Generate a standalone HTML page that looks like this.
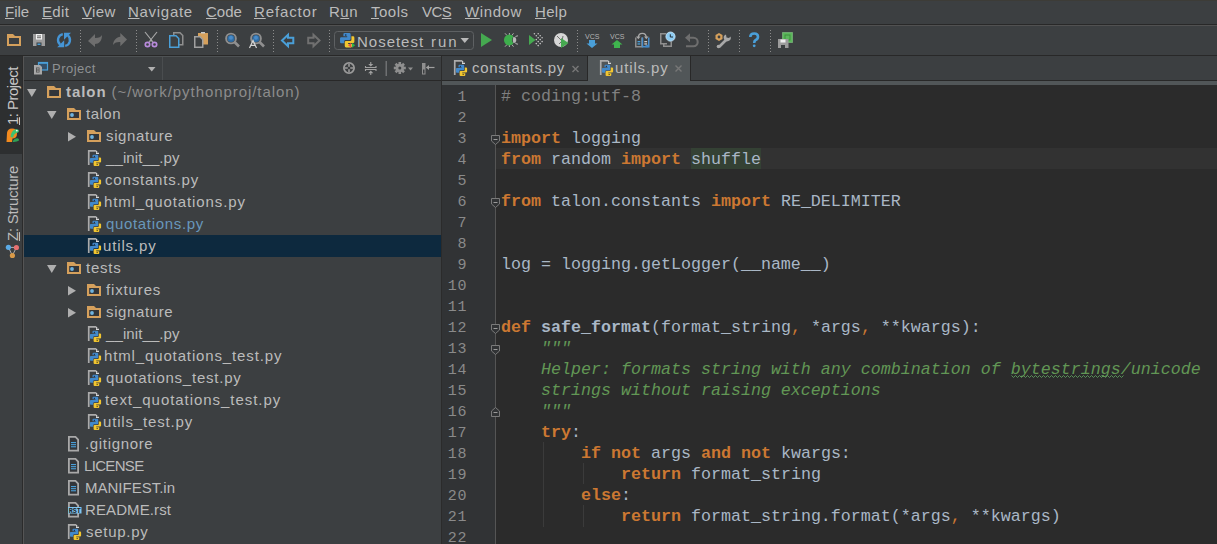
<!DOCTYPE html><html><head><meta charset="utf-8"><style>
html,body{margin:0;padding:0;}
body{width:1217px;height:544px;overflow:hidden;position:relative;background:#3C3F41;font-family:'Liberation Sans', sans-serif;}
.r{position:absolute;}
.t{position:absolute;white-space:pre;line-height:0;height:0;}
svg{position:absolute;overflow:visible;}
u{text-decoration:underline;text-underline-offset:1px;text-decoration-thickness:1px;}
.rot u{text-underline-offset:1px;}
.k{color:#CC7832;font-weight:bold;}
.c{color:#808080;}
.d{color:#629755;font-style:italic;}
.fn{font-weight:bold;}
.o{color:#CC7832;}
</style></head><body>
<div class="t" style="left:5px;top:12px;font-family:'Liberation Sans', sans-serif;font-size:15px;color:#BBBBBB;font-weight:normal;letter-spacing:0.000px;"><u>F</u>ile</div>
<div class="t" style="left:42px;top:12px;font-family:'Liberation Sans', sans-serif;font-size:15px;color:#BBBBBB;font-weight:normal;letter-spacing:0.334px;"><u>E</u>dit</div>
<div class="t" style="left:82px;top:12px;font-family:'Liberation Sans', sans-serif;font-size:15px;color:#BBBBBB;font-weight:normal;letter-spacing:0.334px;"><u>V</u>iew</div>
<div class="t" style="left:128px;top:12px;font-family:'Liberation Sans', sans-serif;font-size:15px;color:#BBBBBB;font-weight:normal;letter-spacing:0.714px;"><u>N</u>avigate</div>
<div class="t" style="left:206px;top:12px;font-family:'Liberation Sans', sans-serif;font-size:15px;color:#BBBBBB;font-weight:normal;letter-spacing:0.000px;"><u>C</u>ode</div>
<div class="t" style="left:254px;top:12px;font-family:'Liberation Sans', sans-serif;font-size:15px;color:#BBBBBB;font-weight:normal;letter-spacing:0.857px;"><u>R</u>efactor</div>
<div class="t" style="left:329px;top:12px;font-family:'Liberation Sans', sans-serif;font-size:15px;color:#BBBBBB;font-weight:normal;letter-spacing:0.500px;">R<u>u</u>n</div>
<div class="t" style="left:371px;top:12px;font-family:'Liberation Sans', sans-serif;font-size:15px;color:#BBBBBB;font-weight:normal;letter-spacing:0.500px;"><u>T</u>ools</div>
<div class="t" style="left:422px;top:12px;font-family:'Liberation Sans', sans-serif;font-size:15px;color:#BBBBBB;font-weight:normal;letter-spacing:-0.500px;">VC<u>S</u></div>
<div class="t" style="left:465px;top:12px;font-family:'Liberation Sans', sans-serif;font-size:15px;color:#BBBBBB;font-weight:normal;letter-spacing:0.600px;"><u>W</u>indow</div>
<div class="t" style="left:535px;top:12px;font-family:'Liberation Sans', sans-serif;font-size:15px;color:#BBBBBB;font-weight:normal;letter-spacing:0.334px;"><u>H</u>elp</div>
<div class="r" style="left:0px;top:0px;width:1217px;height:1px;background:#3D3C37;"></div>
<div class="r" style="left:0px;top:24px;width:1217px;height:1px;background:#282828;"></div>
<div class="r" style="left:0px;top:25px;width:1217px;height:1px;background:#515151;"></div>
<div class="r" style="left:0px;top:55px;width:1217px;height:1px;background:#282828;"></div>
<div class="r" style="left:0px;top:56px;width:22px;height:98px;background:#2D2F30;"></div>
<div class="r" style="left:22px;top:56px;width:1px;height:488px;background:#2B2B2B;"></div>
<div class="r" style="left:23px;top:56px;width:1px;height:488px;background:#555555;"></div>
<div class="r" style="left:24px;top:56px;width:417px;height:1px;background:#4E5254;"></div>
<div class="r" style="left:24px;top:80px;width:417px;height:1px;background:#282828;"></div>
<div class="r" style="left:162px;top:57px;width:1px;height:23px;background:#4A4D4F;"></div>
<div class="t" style="left:52px;top:69px;font-family:'Liberation Sans', sans-serif;font-size:13px;color:#8E9193;font-weight:normal;letter-spacing:0.500px;">Project</div>
<div class="t" style="left:357px;top:42px;font-family:'Liberation Sans', sans-serif;font-size:15px;color:#BBBBBB;font-weight:normal;letter-spacing:0.987px;">Nosetest</div>
<div class="t" style="left:431px;top:42px;font-family:'Liberation Sans', sans-serif;font-size:15px;color:#BBBBBB;font-weight:normal;letter-spacing:2.000px;">run</div>
<div class="t rot" style="left:13px;top:125px;transform-origin:0 0;transform:rotate(-90deg);font-family:'Liberation Sans', sans-serif;font-size:15px;color:#C8C8C8;font-weight:normal;letter-spacing:-0.556px;"><u>1</u>: Project</div>
<div class="t rot" style="left:13px;top:241px;transform-origin:0 0;transform:rotate(-90deg);font-family:'Liberation Sans', sans-serif;font-size:15px;color:#BBBBBB;font-weight:normal;letter-spacing:-0.272px;"><u>Z</u>: Structure</div>
<div class="r" style="left:24px;top:235px;width:417px;height:22px;background:#0D293E;"></div>
<div class="r" style="left:441px;top:56px;width:1px;height:488px;background:#2B2B2B;"></div>
<div class="t" style="left:66px;top:92px;font-family:'Liberation Sans', sans-serif;font-size:15px;color:#BBBBBB;font-weight:normal;letter-spacing:0.933px;"><b>talon</b><span style="color:#8C8C8C"> (~/work/pythonproj/talon)</span></div>
<div class="t" style="left:86px;top:114px;font-family:'Liberation Sans', sans-serif;font-size:15px;color:#BBBBBB;font-weight:normal;letter-spacing:0.500px;">talon</div>
<div class="t" style="left:106px;top:136px;font-family:'Liberation Sans', sans-serif;font-size:15px;color:#BBBBBB;font-weight:normal;letter-spacing:0.625px;">signature</div>
<div class="t" style="left:106px;top:158px;font-family:'Liberation Sans', sans-serif;font-size:15px;color:#BBBBBB;font-weight:normal;letter-spacing:0.100px;">__init__.py</div>
<div class="t" style="left:105px;top:180px;font-family:'Liberation Sans', sans-serif;font-size:15px;color:#BBBBBB;font-weight:normal;letter-spacing:0.819px;">constants.py</div>
<div class="t" style="left:104px;top:202px;font-family:'Liberation Sans', sans-serif;font-size:15px;color:#BBBBBB;font-weight:normal;letter-spacing:0.882px;">html_quotations.py</div>
<div class="t" style="left:106px;top:224px;font-family:'Liberation Sans', sans-serif;font-size:15px;color:#6897BB;font-weight:normal;letter-spacing:0.667px;">quotations.py</div>
<div class="t" style="left:103px;top:246px;font-family:'Liberation Sans', sans-serif;font-size:15px;color:#BBBBBB;font-weight:normal;letter-spacing:0.858px;">utils.py</div>
<div class="t" style="left:86px;top:268px;font-family:'Liberation Sans', sans-serif;font-size:15px;color:#BBBBBB;font-weight:normal;letter-spacing:0.750px;">tests</div>
<div class="t" style="left:106px;top:290px;font-family:'Liberation Sans', sans-serif;font-size:15px;color:#BBBBBB;font-weight:normal;letter-spacing:0.858px;">fixtures</div>
<div class="t" style="left:106px;top:312px;font-family:'Liberation Sans', sans-serif;font-size:15px;color:#BBBBBB;font-weight:normal;letter-spacing:0.625px;">signature</div>
<div class="t" style="left:106px;top:334px;font-family:'Liberation Sans', sans-serif;font-size:15px;color:#BBBBBB;font-weight:normal;letter-spacing:0.100px;">__init__.py</div>
<div class="t" style="left:104px;top:356px;font-family:'Liberation Sans', sans-serif;font-size:15px;color:#BBBBBB;font-weight:normal;letter-spacing:0.864px;">html_quotations_test.py</div>
<div class="t" style="left:106px;top:378px;font-family:'Liberation Sans', sans-serif;font-size:15px;color:#BBBBBB;font-weight:normal;letter-spacing:0.765px;">quotations_test.py</div>
<div class="t" style="left:105px;top:400px;font-family:'Liberation Sans', sans-serif;font-size:15px;color:#BBBBBB;font-weight:normal;letter-spacing:0.955px;">text_quotations_test.py</div>
<div class="t" style="left:103px;top:422px;font-family:'Liberation Sans', sans-serif;font-size:15px;color:#BBBBBB;font-weight:normal;letter-spacing:0.834px;">utils_test.py</div>
<div class="t" style="left:85px;top:444px;font-family:'Liberation Sans', sans-serif;font-size:15px;color:#BBBBBB;font-weight:normal;letter-spacing:0.667px;">.gitignore</div>
<div class="t" style="left:84px;top:466px;font-family:'Liberation Sans', sans-serif;font-size:15px;color:#BBBBBB;font-weight:normal;letter-spacing:-0.666px;">LICENSE</div>
<div class="t" style="left:85px;top:488px;font-family:'Liberation Sans', sans-serif;font-size:15px;color:#BBBBBB;font-weight:normal;letter-spacing:0.000px;">MANIFEST.in</div>
<div class="t" style="left:85px;top:510px;font-family:'Liberation Sans', sans-serif;font-size:15px;color:#BBBBBB;font-weight:normal;letter-spacing:0.111px;">README.rst</div>
<div class="t" style="left:86px;top:532px;font-family:'Liberation Sans', sans-serif;font-size:15px;color:#BBBBBB;font-weight:normal;letter-spacing:0.714px;">setup.py</div>
<div class="r" style="left:442px;top:80px;width:775px;height:1px;background:#282828;"></div>
<div class="r" style="left:587px;top:56px;width:1px;height:25px;background:#282828;"></div>
<div class="r" style="left:588px;top:56px;width:102px;height:25px;background:#515658;"></div>
<div class="r" style="left:690px;top:56px;width:1px;height:25px;background:#282828;"></div>
<div class="r" style="left:442px;top:81px;width:775px;height:4px;background:#515658;"></div>
<div class="t" style="left:472px;top:68px;font-family:'Liberation Sans', sans-serif;font-size:15px;color:#BBBBBB;font-weight:normal;letter-spacing:0.728px;">constants.py</div>
<div class="t" style="left:615px;top:68px;font-family:'Liberation Sans', sans-serif;font-size:15px;color:#BBBBBB;font-weight:normal;letter-spacing:0.858px;">utils.py</div>
<div class="r" style="left:442px;top:85px;width:54px;height:459px;background:#313335;"></div>
<div class="r" style="left:495px;top:85px;width:1px;height:459px;background:#555555;"></div>
<div class="r" style="left:496px;top:85px;width:721px;height:459px;background:#2B2B2B;"></div>
<div class="r" style="left:496px;top:148px;width:721px;height:21px;background:#323232;"></div>
<div class="r" style="left:691px;top:148px;width:70px;height:21px;background:#344134;"></div>
<div class="t" style="left:416px;width:51px;text-align:right;top:98px;font-family:'Liberation Mono', monospace;font-size:15px;letter-spacing:0.6px;color:#8A8A8A">1</div>
<div class="t" style="left:501px;top:97px;font-family:'Liberation Mono', monospace;font-size:16.67px;color:#A9B7C6"><span class="c"># coding:utf-8</span></div>
<div class="t" style="left:416px;width:51px;text-align:right;top:119px;font-family:'Liberation Mono', monospace;font-size:15px;letter-spacing:0.6px;color:#8A8A8A">2</div>
<div class="t" style="left:416px;width:51px;text-align:right;top:140px;font-family:'Liberation Mono', monospace;font-size:15px;letter-spacing:0.6px;color:#8A8A8A">3</div>
<div class="t" style="left:501px;top:139px;font-family:'Liberation Mono', monospace;font-size:16.67px;color:#A9B7C6"><span class="k">import</span> logging</div>
<div class="t" style="left:416px;width:51px;text-align:right;top:161px;font-family:'Liberation Mono', monospace;font-size:15px;letter-spacing:0.6px;color:#8A8A8A">4</div>
<div class="t" style="left:501px;top:160px;font-family:'Liberation Mono', monospace;font-size:16.67px;color:#A9B7C6"><span class="k">from</span> random <span class="k">import</span> shuffle</div>
<div class="t" style="left:416px;width:51px;text-align:right;top:182px;font-family:'Liberation Mono', monospace;font-size:15px;letter-spacing:0.6px;color:#8A8A8A">5</div>
<div class="t" style="left:416px;width:51px;text-align:right;top:203px;font-family:'Liberation Mono', monospace;font-size:15px;letter-spacing:0.6px;color:#8A8A8A">6</div>
<div class="t" style="left:501px;top:202px;font-family:'Liberation Mono', monospace;font-size:16.67px;color:#A9B7C6"><span class="k">from</span> talon.constants <span class="k">import</span> RE_DELIMITER</div>
<div class="t" style="left:416px;width:51px;text-align:right;top:224px;font-family:'Liberation Mono', monospace;font-size:15px;letter-spacing:0.6px;color:#8A8A8A">7</div>
<div class="t" style="left:416px;width:51px;text-align:right;top:245px;font-family:'Liberation Mono', monospace;font-size:15px;letter-spacing:0.6px;color:#8A8A8A">8</div>
<div class="t" style="left:416px;width:51px;text-align:right;top:266px;font-family:'Liberation Mono', monospace;font-size:15px;letter-spacing:0.6px;color:#8A8A8A">9</div>
<div class="t" style="left:501px;top:265px;font-family:'Liberation Mono', monospace;font-size:16.67px;color:#A9B7C6">log = logging.getLogger(__name__)</div>
<div class="t" style="left:416px;width:51px;text-align:right;top:287px;font-family:'Liberation Mono', monospace;font-size:15px;letter-spacing:0.6px;color:#8A8A8A">10</div>
<div class="t" style="left:416px;width:51px;text-align:right;top:308px;font-family:'Liberation Mono', monospace;font-size:15px;letter-spacing:0.6px;color:#8A8A8A">11</div>
<div class="t" style="left:416px;width:51px;text-align:right;top:329px;font-family:'Liberation Mono', monospace;font-size:15px;letter-spacing:0.6px;color:#8A8A8A">12</div>
<div class="t" style="left:501px;top:328px;font-family:'Liberation Mono', monospace;font-size:16.67px;color:#A9B7C6"><span class="k">def</span> <span class="fn">safe_format</span>(format_string<span class="o">,</span> *args<span class="o">,</span> **kwargs):</div>
<div class="t" style="left:416px;width:51px;text-align:right;top:350px;font-family:'Liberation Mono', monospace;font-size:15px;letter-spacing:0.6px;color:#8A8A8A">13</div>
<div class="t" style="left:501px;top:349px;font-family:'Liberation Mono', monospace;font-size:16.67px;color:#A9B7C6">    <span class="d">"""</span></div>
<div class="t" style="left:416px;width:51px;text-align:right;top:371px;font-family:'Liberation Mono', monospace;font-size:15px;letter-spacing:0.6px;color:#8A8A8A">14</div>
<div class="t" style="left:501px;top:370px;font-family:'Liberation Mono', monospace;font-size:16.67px;color:#A9B7C6">    <span class="d">Helper: formats string with any combination of bytestrings/unicode</span></div>
<div class="t" style="left:416px;width:51px;text-align:right;top:392px;font-family:'Liberation Mono', monospace;font-size:15px;letter-spacing:0.6px;color:#8A8A8A">15</div>
<div class="t" style="left:501px;top:391px;font-family:'Liberation Mono', monospace;font-size:16.67px;color:#A9B7C6">    <span class="d">strings without raising exceptions</span></div>
<div class="t" style="left:416px;width:51px;text-align:right;top:413px;font-family:'Liberation Mono', monospace;font-size:15px;letter-spacing:0.6px;color:#8A8A8A">16</div>
<div class="t" style="left:501px;top:412px;font-family:'Liberation Mono', monospace;font-size:16.67px;color:#A9B7C6">    <span class="d">"""</span></div>
<div class="t" style="left:416px;width:51px;text-align:right;top:434px;font-family:'Liberation Mono', monospace;font-size:15px;letter-spacing:0.6px;color:#8A8A8A">17</div>
<div class="t" style="left:501px;top:433px;font-family:'Liberation Mono', monospace;font-size:16.67px;color:#A9B7C6">    <span class="k">try</span>:</div>
<div class="t" style="left:416px;width:51px;text-align:right;top:455px;font-family:'Liberation Mono', monospace;font-size:15px;letter-spacing:0.6px;color:#8A8A8A">18</div>
<div class="t" style="left:501px;top:454px;font-family:'Liberation Mono', monospace;font-size:16.67px;color:#A9B7C6">        <span class="k">if not</span> args <span class="k">and not</span> kwargs:</div>
<div class="t" style="left:416px;width:51px;text-align:right;top:476px;font-family:'Liberation Mono', monospace;font-size:15px;letter-spacing:0.6px;color:#8A8A8A">19</div>
<div class="t" style="left:501px;top:475px;font-family:'Liberation Mono', monospace;font-size:16.67px;color:#A9B7C6">            <span class="k">return</span> format_string</div>
<div class="t" style="left:416px;width:51px;text-align:right;top:497px;font-family:'Liberation Mono', monospace;font-size:15px;letter-spacing:0.6px;color:#8A8A8A">20</div>
<div class="t" style="left:501px;top:496px;font-family:'Liberation Mono', monospace;font-size:16.67px;color:#A9B7C6">        <span class="k">else</span>:</div>
<div class="t" style="left:416px;width:51px;text-align:right;top:518px;font-family:'Liberation Mono', monospace;font-size:15px;letter-spacing:0.6px;color:#8A8A8A">21</div>
<div class="t" style="left:501px;top:517px;font-family:'Liberation Mono', monospace;font-size:16.67px;color:#A9B7C6">            <span class="k">return</span> format_string.format(*args<span class="o">,</span> **kwargs)</div>
<div class="t" style="left:416px;width:51px;text-align:right;top:539px;font-family:'Liberation Mono', monospace;font-size:15px;letter-spacing:0.6px;color:#8A8A8A">22</div>
<svg width="1217" height="544" viewBox="0 0 1217 544" style="left:0;top:0">
<path d="M7,34 H13 L15,36 H21 V46 H7 Z" fill="#D5A05C"/><rect x="9" y="38" width="10" height="6" fill="#3C3F41"/>
<rect x="33" y="34" width="12" height="12" fill="#9C9C9C"/><rect x="36" y="34" width="6" height="5.5" fill="#F4F4F4"/><rect x="37" y="35.5" width="4" height="0.9" fill="#555"/><rect x="37" y="37.3" width="4" height="0.9" fill="#555"/><rect x="36.5" y="42.5" width="5" height="3.5" fill="#3C3F41"/><rect x="37.5" y="43.5" width="3" height="1.5" fill="#4A9FD8"/>
<path d="M62.8,34.2 A5.9,5.9 0 0 0 60.2,44.6" fill="none" stroke="#4595D6" stroke-width="2.3"/><path d="M57.2,47.2 L64.2,47.2 L64.2,40.3 Z" fill="#4595D6"/>
<path d="M65.2,45.8 A5.9,5.9 0 0 0 67.8,35.4" fill="none" stroke="#4595D6" stroke-width="2.3"/><path d="M71,32.8 L64,32.8 L64,39.7 Z" fill="#4595D6"/>
<rect x="80" y="30" width="1" height="1" fill="#8C8C8C"/>
<rect x="80" y="33" width="1" height="1" fill="#8C8C8C"/>
<rect x="80" y="36" width="1" height="1" fill="#8C8C8C"/>
<rect x="80" y="39" width="1" height="1" fill="#8C8C8C"/>
<rect x="80" y="42" width="1" height="1" fill="#8C8C8C"/>
<rect x="80" y="45" width="1" height="1" fill="#8C8C8C"/>
<rect x="80" y="48" width="1" height="1" fill="#8C8C8C"/>
<rect x="80" y="51" width="1" height="1" fill="#8C8C8C"/>
<rect x="136" y="30" width="1" height="1" fill="#8C8C8C"/>
<rect x="136" y="33" width="1" height="1" fill="#8C8C8C"/>
<rect x="136" y="36" width="1" height="1" fill="#8C8C8C"/>
<rect x="136" y="39" width="1" height="1" fill="#8C8C8C"/>
<rect x="136" y="42" width="1" height="1" fill="#8C8C8C"/>
<rect x="136" y="45" width="1" height="1" fill="#8C8C8C"/>
<rect x="136" y="48" width="1" height="1" fill="#8C8C8C"/>
<rect x="136" y="51" width="1" height="1" fill="#8C8C8C"/>
<rect x="217" y="30" width="1" height="1" fill="#8C8C8C"/>
<rect x="217" y="33" width="1" height="1" fill="#8C8C8C"/>
<rect x="217" y="36" width="1" height="1" fill="#8C8C8C"/>
<rect x="217" y="39" width="1" height="1" fill="#8C8C8C"/>
<rect x="217" y="42" width="1" height="1" fill="#8C8C8C"/>
<rect x="217" y="45" width="1" height="1" fill="#8C8C8C"/>
<rect x="217" y="48" width="1" height="1" fill="#8C8C8C"/>
<rect x="217" y="51" width="1" height="1" fill="#8C8C8C"/>
<rect x="273" y="30" width="1" height="1" fill="#8C8C8C"/>
<rect x="273" y="33" width="1" height="1" fill="#8C8C8C"/>
<rect x="273" y="36" width="1" height="1" fill="#8C8C8C"/>
<rect x="273" y="39" width="1" height="1" fill="#8C8C8C"/>
<rect x="273" y="42" width="1" height="1" fill="#8C8C8C"/>
<rect x="273" y="45" width="1" height="1" fill="#8C8C8C"/>
<rect x="273" y="48" width="1" height="1" fill="#8C8C8C"/>
<rect x="273" y="51" width="1" height="1" fill="#8C8C8C"/>
<rect x="329" y="30" width="1" height="1" fill="#8C8C8C"/>
<rect x="329" y="33" width="1" height="1" fill="#8C8C8C"/>
<rect x="329" y="36" width="1" height="1" fill="#8C8C8C"/>
<rect x="329" y="39" width="1" height="1" fill="#8C8C8C"/>
<rect x="329" y="42" width="1" height="1" fill="#8C8C8C"/>
<rect x="329" y="45" width="1" height="1" fill="#8C8C8C"/>
<rect x="329" y="48" width="1" height="1" fill="#8C8C8C"/>
<rect x="329" y="51" width="1" height="1" fill="#8C8C8C"/>
<rect x="577" y="30" width="1" height="1" fill="#8C8C8C"/>
<rect x="577" y="33" width="1" height="1" fill="#8C8C8C"/>
<rect x="577" y="36" width="1" height="1" fill="#8C8C8C"/>
<rect x="577" y="39" width="1" height="1" fill="#8C8C8C"/>
<rect x="577" y="42" width="1" height="1" fill="#8C8C8C"/>
<rect x="577" y="45" width="1" height="1" fill="#8C8C8C"/>
<rect x="577" y="48" width="1" height="1" fill="#8C8C8C"/>
<rect x="577" y="51" width="1" height="1" fill="#8C8C8C"/>
<rect x="708" y="30" width="1" height="1" fill="#8C8C8C"/>
<rect x="708" y="33" width="1" height="1" fill="#8C8C8C"/>
<rect x="708" y="36" width="1" height="1" fill="#8C8C8C"/>
<rect x="708" y="39" width="1" height="1" fill="#8C8C8C"/>
<rect x="708" y="42" width="1" height="1" fill="#8C8C8C"/>
<rect x="708" y="45" width="1" height="1" fill="#8C8C8C"/>
<rect x="708" y="48" width="1" height="1" fill="#8C8C8C"/>
<rect x="708" y="51" width="1" height="1" fill="#8C8C8C"/>
<rect x="739" y="30" width="1" height="1" fill="#8C8C8C"/>
<rect x="739" y="33" width="1" height="1" fill="#8C8C8C"/>
<rect x="739" y="36" width="1" height="1" fill="#8C8C8C"/>
<rect x="739" y="39" width="1" height="1" fill="#8C8C8C"/>
<rect x="739" y="42" width="1" height="1" fill="#8C8C8C"/>
<rect x="739" y="45" width="1" height="1" fill="#8C8C8C"/>
<rect x="739" y="48" width="1" height="1" fill="#8C8C8C"/>
<rect x="739" y="51" width="1" height="1" fill="#8C8C8C"/>
<rect x="770" y="30" width="1" height="1" fill="#8C8C8C"/>
<rect x="770" y="33" width="1" height="1" fill="#8C8C8C"/>
<rect x="770" y="36" width="1" height="1" fill="#8C8C8C"/>
<rect x="770" y="39" width="1" height="1" fill="#8C8C8C"/>
<rect x="770" y="42" width="1" height="1" fill="#8C8C8C"/>
<rect x="770" y="45" width="1" height="1" fill="#8C8C8C"/>
<rect x="770" y="48" width="1" height="1" fill="#8C8C8C"/>
<rect x="770" y="51" width="1" height="1" fill="#8C8C8C"/>
<path d="M88,41 L95,34 L95,38 C99,38 101,37 102,35 C102,41 99,44 95,44 L95,47 Z" fill="#6E6E6E"/>
<path d="M127,39.5 L120.3,33 V36.8 C116.5,37.2 113.5,40 113,45 C115,42.2 117.5,41.8 120.3,42 V46.2 Z" fill="#6E6E6E"/>
<path d="M145,32 L153,42 M157,32 L149,42" stroke="#A8A8A8" stroke-width="1.2"/><rect x="150" y="39.5" width="2" height="2" fill="#A8A8A8"/>
<circle cx="147.5" cy="44.5" r="2.2" fill="none" stroke="#B98BDC" stroke-width="1.7"/><circle cx="154.5" cy="44.5" r="2.2" fill="none" stroke="#B98BDC" stroke-width="1.7"/>
<path d="M173.75,36 V32.75 H180 L182.75,35.5 V44.75 H179" fill="none" stroke="#8F8F8F" stroke-width="1.5"/>
<path d="M169.75,47.25 V35.75 H176 L178.75,38.5 V47.25 Z" fill="#3C3F41" stroke="#4A9FD8" stroke-width="1.5"/>
<rect x="198" y="33" width="10" height="11.5" fill="#D5A05C"/><rect x="201" y="32" width="4" height="1.5" fill="#C9C9C9"/>
<path d="M194.75,47.25 V36.75 H200 L202.75,39.5 V47.25 Z" fill="#3C3F41" stroke="#A0A0A0" stroke-width="1.5"/>
<circle cx="231" cy="38.5" r="3.6" fill="#2F6EA6"/><circle cx="231" cy="37.8" r="2" fill="#4A8BC8"/>
<circle cx="231" cy="38.5" r="4.9" fill="none" stroke="#8F8F8F" stroke-width="1.9"/>
<path d="M234.5,42 L239.0,46.5" stroke="#8F8F8F" stroke-width="2.6"/>
<circle cx="256" cy="38.5" r="3.6" fill="#2F6EA6"/><circle cx="256" cy="37.8" r="2" fill="#4A8BC8"/>
<circle cx="256" cy="38.5" r="4.9" fill="none" stroke="#8F8F8F" stroke-width="1.9"/>
<path d="M259.5,42 L264.0,46.5" stroke="#8F8F8F" stroke-width="2.6"/>
<path d="M249.5,48 L253,40.5 L256.5,48 M251,45.3 H255" fill="none" stroke="#D4D4D4" stroke-width="1.2"/>
<path d="M282,40.5 L288,34.8 V37.8 H293.3 V43.2 H288 V46.2 Z" fill="none" stroke="#4A9FD8" stroke-width="2"/>
<path d="M319.5,40.5 L313.5,34.8 V37.8 H308.2 V43.2 H313.5 V46.2 Z" fill="none" stroke="#707070" stroke-width="2"/>
<rect x="334.5" y="31.5" width="139" height="18" rx="3" fill="none" stroke="#5E6163" stroke-width="1"/>
<g transform="translate(337.6,26.9) scale(1.28)">
<path d="M4.5,5.8 Q4.5,4.8 5.5,4.8 H9.2 Q10.2,4.8 10.2,5.8 V9.3 Q10.2,10.3 9.2,10.3 H6.2 Q5.2,10.3 5.2,11.3 V12.7 H2.9 Q1.9,12.7 1.9,11.7 V9 Q1.9,8 2.9,8 H7.5 V7.3 H4.5 Z" fill="#4189CC"/>
<path d="M10.8,7.4 H12.1 Q13.1,7.4 13.1,8.4 V11.6 Q13.1,12.6 12.1,12.6 H8.2 V13.3 H11.3 V15 Q11.3,16 10.3,16 H6.6 Q5.6,16 5.6,15 V12 Q5.6,11 6.6,11 H9.8 Q10.8,11 10.8,10 Z" fill="#F2C630"/>
<rect x="5.8" y="5.8" width="1.1" height="1.1" fill="#1F3550"/>
</g>
<path d="M351.2,42.8 L348,45.3 L351.2,47.8 Z" fill="#E05A48"/><path d="M352,42.8 L355.2,45.3 L352,47.8 Z" fill="#2FB34A"/>
<path d="M460.5,38 H469 L464.75,43 Z" fill="#B8B8B8"/>
<path d="M481,33 L492,40 L481,47 Z" fill="#45A950"/>
<path d="M505,33.3 L507,35.5 M509.4,33 V35.2 M513.5,33.3 L511.8,35.5 M505,46.7 L507,44.5 M509.4,47 V44.8 M513.5,46.7 L511.8,44.5" stroke="#B0B0B0" stroke-width="1"/>
<path d="M513.4,36.4 A5.4,5.4 0 1 0 513.4,43.6 A6,6 0 0 1 513.4,36.4 Z" fill="#3DAE4C"/>
<path d="M513.3,37 A3,3 0 0 1 513.3,43 Q512.3,40 513.3,37 Z" fill="#B8B8B8"/><path d="M514.8,37.6 Q515.6,35.8 518,35.8 M514.8,42.4 Q515.6,44.2 518,44.2" stroke="#B0B0B0" stroke-width="1" fill="none"/>
<circle cx="534.4" cy="33.7" r="0.8" fill="#C4C4C4"/>
<circle cx="538.2" cy="33.7" r="0.8" fill="#C4C4C4"/>
<circle cx="536.3" cy="35.7" r="0.8" fill="#C4C4C4"/>
<circle cx="540.2" cy="35.7" r="0.8" fill="#C4C4C4"/>
<circle cx="538.2" cy="37.7" r="0.8" fill="#C4C4C4"/>
<circle cx="542.1" cy="37.7" r="0.8" fill="#C4C4C4"/>
<circle cx="536.3" cy="39.6" r="0.8" fill="#C4C4C4"/>
<circle cx="540.2" cy="39.6" r="0.8" fill="#C4C4C4"/>
<circle cx="538.2" cy="41.6" r="0.8" fill="#C4C4C4"/>
<circle cx="542.1" cy="41.6" r="0.8" fill="#C4C4C4"/>
<circle cx="536.3" cy="43.6" r="0.8" fill="#C4C4C4"/>
<circle cx="540.2" cy="43.6" r="0.8" fill="#C4C4C4"/>
<circle cx="538.2" cy="45.6" r="0.8" fill="#C4C4C4"/>
<path d="M529,35 L535.5,40 L529,45 Z" fill="#45A950"/>
<circle cx="561" cy="40" r="7" fill="#D6D6D6"/><path d="M557,36 L562,41 M559,44 L562,41 M563,36 L562,41" stroke="#555" stroke-width="0.8"/>
<path d="M561,38 L568.5,43 L561,48 Z" fill="#45A950"/>
<text x="585" y="38.7" font-family="Liberation Sans" font-size="7.2" fill="#B4B4B4" textLength="14.5" lengthAdjust="spacingAndGlyphs">VCS</text>
<path d="M589,40 H595 V43.5 H597.5 L592,48 L586.5,43.5 H589 Z" fill="#4A9FD8"/>
<text x="610" y="38.7" font-family="Liberation Sans" font-size="7.2" fill="#B4B4B4" textLength="14.5" lengthAdjust="spacingAndGlyphs">VCS</text>
<path d="M614,48 H620 V44.5 H622.5 L617,40 L611.5,44.5 H614 Z" fill="#3FB44E"/>
<path d="M635.75,37.5 V46.75 H642 V37.5" fill="none" stroke="#8F8F8F" stroke-width="1.5"/><path d="M642.5,37.5 V46.75 H648.75 V37.5" fill="none" stroke="#4A8FCC" stroke-width="1.5"/><rect x="645.5" y="44.8" width="3" height="2.5" fill="#3F86C6"/>
<rect x="637.5" y="41" width="2.8" height="1.3" fill="#4A9FD8"/><rect x="637.5" y="43.3" width="2.8" height="1.3" fill="#4A9FD8"/><rect x="644.3" y="41" width="2.8" height="1.3" fill="#C8C8C8"/><rect x="644.3" y="43.3" width="2.8" height="1.3" fill="#C8C8C8"/>
<path d="M638.3,38 Q638.3,33.3 642.3,33.3 Q646.3,33.3 646.3,38" fill="none" stroke="#A8A8A8" stroke-width="1.3"/><path d="M636,36.5 L638.3,39.2 L640.6,36.5 Z M644,36.5 L646.3,39.2 L648.6,36.5 Z" fill="#A8A8A8"/>
<path d="M666,33.75 H660.75 V43.75 H667" fill="none" stroke="#8F8F8F" stroke-width="1.5"/><path d="M663.75,44 V46.25 H671.25 V41.5" fill="none" stroke="#8F8F8F" stroke-width="1.5"/>
<circle cx="670.5" cy="36.6" r="4.6" fill="#8CCBF2" stroke="#CFEAFB" stroke-width="0.8"/><path d="M670.3,34.3 V37 H673" stroke="#1E2A33" stroke-width="1" fill="none"/>
<path d="M689,37.8 H693.5 A4.2,4.2 0 0 1 693.5,46.2 H686" fill="none" stroke="#6E6E6E" stroke-width="2.1"/><path d="M685,37.8 L690,33.3 V42.3 Z" fill="#6E6E6E"/>
<path d="M719,33 L722.5,35 V39 L719,41 L715.5,39 V35 Z" fill="#D5A05C"/><circle cx="719" cy="37" r="1.4" fill="#3C3F41"/>
<path d="M719,47 L727,39" stroke="#A8A8A8" stroke-width="2.6"/><path d="M730.5,36.5 A3.5,3.5 0 1 1 726,34.5 L726.5,37.5 L729,38 Z" fill="#A8A8A8"/><circle cx="718.5" cy="46.5" r="1.8" fill="#A8A8A8"/>
<path d="M750.3,37 Q750.3,33.5 754.2,33.5 Q758,33.5 758,36.8 Q758,39 755.5,40.2 Q754.2,41 754.2,43" fill="none" stroke="#4A9FD8" stroke-width="2.6"/><circle cx="754.2" cy="45.8" r="1.4" fill="#4A9FD8"/>
<rect x="782.5" y="32.5" width="10" height="10" fill="#5CB85C" stroke="#8FD08F" stroke-width="1" stroke-dasharray="1,1"/><rect x="785" y="35" width="5" height="5" fill="none" stroke="#3E8E3E" stroke-width="1"/>
<rect x="778" y="39" width="10.5" height="9" fill="#9C9C9C"/><rect x="780.5" y="39.5" width="5" height="3" fill="#EEEEEE"/><rect x="781" y="45" width="4" height="3" fill="#3C3F41"/>
<rect x="38.5" y="62.5" width="9" height="7.5" fill="#34506A" stroke="#4A9FD8" stroke-width="1.2"/><rect x="38" y="62" width="10" height="1.8" fill="#4A9FD8"/>
<path d="M34,65 H40 L42,67 V74.5 H34 Z" fill="#A8A8A8"/><rect x="36" y="67.5" width="3.5" height="5" fill="#505050"/><rect x="36.8" y="68.3" width="2" height="1.2" fill="#A8A8A8"/><rect x="36.8" y="70.5" width="2" height="1.2" fill="#A8A8A8"/>
<path d="M148,67 H155.5 L151.75,71.5 Z" fill="#B0B0B0"/>
<circle cx="349" cy="68" r="5.1" fill="none" stroke="#9A9A9A" stroke-width="1.8"/>
<path d="M349,64 V72 M345,68 H353" stroke="#9A9A9A" stroke-width="1.6"/><rect x="347.8" y="66.8" width="2.4" height="2.4" fill="#393C3E"/>
<path d="M365.5,66 V67.5 H376 V66 M365.5,71 V69.5 H376 V71" fill="none" stroke="#A0A0A0" stroke-width="1.1"/>
<path d="M370.75,62 V64.5 M370.75,72.5 V75" stroke="#A0A0A0" stroke-width="1.1"/><path d="M368.2,64 L370.75,66.6 L373.3,64 Z M368.2,73.2 L370.75,70.6 L373.3,73.2 Z" fill="#A0A0A0"/>
<rect x="385.5" y="61" width="1.5" height="15" fill="#6E7072"/>
<g transform="translate(399.8,68)">
<rect x="-1.3" y="-6" width="2.6" height="3" fill="#8F8F8F" transform="rotate(0)"/>
<rect x="-1.3" y="-6" width="2.6" height="3" fill="#8F8F8F" transform="rotate(45)"/>
<rect x="-1.3" y="-6" width="2.6" height="3" fill="#8F8F8F" transform="rotate(90)"/>
<rect x="-1.3" y="-6" width="2.6" height="3" fill="#8F8F8F" transform="rotate(135)"/>
<rect x="-1.3" y="-6" width="2.6" height="3" fill="#8F8F8F" transform="rotate(180)"/>
<rect x="-1.3" y="-6" width="2.6" height="3" fill="#8F8F8F" transform="rotate(225)"/>
<rect x="-1.3" y="-6" width="2.6" height="3" fill="#8F8F8F" transform="rotate(270)"/>
<rect x="-1.3" y="-6" width="2.6" height="3" fill="#8F8F8F" transform="rotate(315)"/>
<circle r="4.3" fill="#8F8F8F"/><circle r="1.5" fill="#3C3F41"/></g>
<path d="M408,67.5 H413 L410.5,70.5 Z" fill="#8F8F8F"/>
<rect x="422.5" y="63.5" width="2.5" height="10.5" fill="none" stroke="#8F8F8F" stroke-width="1"/><rect x="422.5" y="63.5" width="2.5" height="6" fill="#8F8F8F"/>
<path d="M426.5,67.5 H434.5" stroke="#A0A0A0" stroke-width="1.2"/><path d="M426,67.5 L429,65 V70 Z" fill="#A0A0A0"/>
<path d="M6.5,142 L7,133 Q7.5,128.5 12,128.5 Q17,128.5 17,133.5 Q17,138.5 12.5,138.5 L12,142 Z" fill="#F28A1E"/>
<path d="M10.5,137 Q11,131 15.5,129.3 Q19,128.8 19,131 Q18.8,132.8 16,133 Q13.5,134.2 13,137.5 Z" fill="#3FC271"/><circle cx="16.8" cy="130.6" r="0.9" fill="#F4F4F4"/>
<path d="M12.5,142 Q13.5,138.5 17.5,138.3 Q19.5,138.8 19,140.6 Q17,142.3 12.5,142 Z" fill="#2F9E55"/>
<path d="M8.4,247.3 L12.4,255.5 L16.4,247.5 Z" fill="none" stroke="#B0B0B0" stroke-width="1"/><circle cx="8.4" cy="247.3" r="2.6" fill="#5AAAE6"/><circle cx="16.4" cy="247.5" r="2.6" fill="#E87070"/><circle cx="12.4" cy="255.5" r="2.6" fill="#D99A48"/>
<path d="M454.75,75 V60.9 H462" fill="none" stroke="#ABABAB" stroke-width="1.7"/>
<path d="M462,60.2 L465,63.2 V64 H462 Z" fill="#D8D8D8"/><rect x="462.8" y="61.8" width="1" height="1" fill="#444"/>
<path d="M458.5,65.8 Q458.5,64.8 459.5,64.8 H463.2 Q464.2,64.8 464.2,65.8 V69.3 Q464.2,70.3 463.2,70.3 H460.2 Q459.2,70.3 459.2,71.3 V72.7 H456.9 Q455.9,72.7 455.9,71.7 V69 Q455.9,68 456.9,68 H461.5 V67.3 H458.5 Z" fill="#4189CC"/>
<path d="M464.8,67.4 H466.1 Q467.1,67.4 467.1,68.4 V71.6 Q467.1,72.6 466.1,72.6 H462.2 V73.3 H465.3 V75 Q465.3,76 464.3,76 H460.6 Q459.6,76 459.6,75 V72 Q459.6,71 460.6,71 H463.8 Q464.8,71 464.8,70 Z" fill="#F2C630"/>
<rect x="459.8" y="65.8" width="1.2" height="1.2" fill="#1F3550"/>
<rect x="462.6" y="73.9" width="1.2" height="1.2" fill="#5A4A10"/>
<path d="M600.75,75 V60.9 H608" fill="none" stroke="#ABABAB" stroke-width="1.7"/>
<path d="M608,60.2 L611,63.2 V64 H608 Z" fill="#D8D8D8"/><rect x="608.8" y="61.8" width="1" height="1" fill="#444"/>
<path d="M604.5,65.8 Q604.5,64.8 605.5,64.8 H609.2 Q610.2,64.8 610.2,65.8 V69.3 Q610.2,70.3 609.2,70.3 H606.2 Q605.2,70.3 605.2,71.3 V72.7 H602.9 Q601.9,72.7 601.9,71.7 V69 Q601.9,68 602.9,68 H607.5 V67.3 H604.5 Z" fill="#4189CC"/>
<path d="M610.8,67.4 H612.1 Q613.1,67.4 613.1,68.4 V71.6 Q613.1,72.6 612.1,72.6 H608.2 V73.3 H611.3 V75 Q611.3,76 610.3,76 H606.6 Q605.6,76 605.6,75 V72 Q605.6,71 606.6,71 H609.8 Q610.8,71 610.8,70 Z" fill="#F2C630"/>
<rect x="605.8" y="65.8" width="1.2" height="1.2" fill="#1F3550"/>
<rect x="608.6" y="73.9" width="1.2" height="1.2" fill="#5A4A10"/>
<path d="M572.5,66 L578.5,72 M578.5,66 L572.5,72" stroke="#777777" stroke-width="1.4"/>
<path d="M675.5,65.5 L681.5,71.5 M681.5,65.5 L675.5,71.5" stroke="#777777" stroke-width="1.4"/>
<path d="M27,89 H36.5 L31.75,97 Z" fill="#AFAFAF"/>
<path d="M47,86 H54 L56,88 H61 V98 H47 Z" fill="#D5A05C"/>
<rect x="49.2" y="90" width="9.8" height="6" fill="#33363A"/>
<path d="M47,111 H56.5 L51.75,119 Z" fill="#AFAFAF"/>
<path d="M67,108 H74 L76,110 H81 V120 H67 Z" fill="#D5A05C"/>
<rect x="69.2" y="112" width="9.8" height="6" fill="#33363A"/>
<circle cx="72" cy="115" r="1.9" fill="#6FB3DF"/>
<path d="M68,132 L76,136.75 L68,141.5 Z" fill="#AFAFAF"/>
<path d="M87,130 H94 L96,132 H101 V142 H87 Z" fill="#D5A05C"/>
<rect x="89.2" y="134" width="9.8" height="6" fill="#33363A"/>
<circle cx="92" cy="137" r="1.9" fill="#6FB3DF"/>
<path d="M88.75,165 V150.9 H96" fill="none" stroke="#ABABAB" stroke-width="1.7"/>
<path d="M96,150.2 L99,153.2 V154 H96 Z" fill="#D8D8D8"/><rect x="96.8" y="151.8" width="1" height="1" fill="#444"/>
<path d="M92.5,155.8 Q92.5,154.8 93.5,154.8 H97.2 Q98.2,154.8 98.2,155.8 V159.3 Q98.2,160.3 97.2,160.3 H94.2 Q93.2,160.3 93.2,161.3 V162.7 H90.9 Q89.9,162.7 89.9,161.7 V159 Q89.9,158 90.9,158 H95.5 V157.3 H92.5 Z" fill="#4189CC"/>
<path d="M98.8,157.4 H100.1 Q101.1,157.4 101.1,158.4 V161.6 Q101.1,162.6 100.1,162.6 H96.2 V163.3 H99.3 V165 Q99.3,166 98.3,166 H94.6 Q93.6,166 93.6,165 V162 Q93.6,161 94.6,161 H97.8 Q98.8,161 98.8,160 Z" fill="#F2C630"/>
<rect x="93.8" y="155.8" width="1.2" height="1.2" fill="#1F3550"/>
<rect x="96.6" y="163.9" width="1.2" height="1.2" fill="#5A4A10"/>
<path d="M88.75,187 V172.9 H96" fill="none" stroke="#ABABAB" stroke-width="1.7"/>
<path d="M96,172.2 L99,175.2 V176 H96 Z" fill="#D8D8D8"/><rect x="96.8" y="173.8" width="1" height="1" fill="#444"/>
<path d="M92.5,177.8 Q92.5,176.8 93.5,176.8 H97.2 Q98.2,176.8 98.2,177.8 V181.3 Q98.2,182.3 97.2,182.3 H94.2 Q93.2,182.3 93.2,183.3 V184.7 H90.9 Q89.9,184.7 89.9,183.7 V181 Q89.9,180 90.9,180 H95.5 V179.3 H92.5 Z" fill="#4189CC"/>
<path d="M98.8,179.4 H100.1 Q101.1,179.4 101.1,180.4 V183.6 Q101.1,184.6 100.1,184.6 H96.2 V185.3 H99.3 V187 Q99.3,188 98.3,188 H94.6 Q93.6,188 93.6,187 V184 Q93.6,183 94.6,183 H97.8 Q98.8,183 98.8,182 Z" fill="#F2C630"/>
<rect x="93.8" y="177.8" width="1.2" height="1.2" fill="#1F3550"/>
<rect x="96.6" y="185.9" width="1.2" height="1.2" fill="#5A4A10"/>
<path d="M88.75,209 V194.9 H96" fill="none" stroke="#ABABAB" stroke-width="1.7"/>
<path d="M96,194.2 L99,197.2 V198 H96 Z" fill="#D8D8D8"/><rect x="96.8" y="195.8" width="1" height="1" fill="#444"/>
<path d="M92.5,199.8 Q92.5,198.8 93.5,198.8 H97.2 Q98.2,198.8 98.2,199.8 V203.3 Q98.2,204.3 97.2,204.3 H94.2 Q93.2,204.3 93.2,205.3 V206.7 H90.9 Q89.9,206.7 89.9,205.7 V203 Q89.9,202 90.9,202 H95.5 V201.3 H92.5 Z" fill="#4189CC"/>
<path d="M98.8,201.4 H100.1 Q101.1,201.4 101.1,202.4 V205.6 Q101.1,206.6 100.1,206.6 H96.2 V207.3 H99.3 V209 Q99.3,210 98.3,210 H94.6 Q93.6,210 93.6,209 V206 Q93.6,205 94.6,205 H97.8 Q98.8,205 98.8,204 Z" fill="#F2C630"/>
<rect x="93.8" y="199.8" width="1.2" height="1.2" fill="#1F3550"/>
<rect x="96.6" y="207.9" width="1.2" height="1.2" fill="#5A4A10"/>
<path d="M88.75,231 V216.9 H96" fill="none" stroke="#ABABAB" stroke-width="1.7"/>
<path d="M96,216.2 L99,219.2 V220 H96 Z" fill="#D8D8D8"/><rect x="96.8" y="217.8" width="1" height="1" fill="#444"/>
<path d="M92.5,221.8 Q92.5,220.8 93.5,220.8 H97.2 Q98.2,220.8 98.2,221.8 V225.3 Q98.2,226.3 97.2,226.3 H94.2 Q93.2,226.3 93.2,227.3 V228.7 H90.9 Q89.9,228.7 89.9,227.7 V225 Q89.9,224 90.9,224 H95.5 V223.3 H92.5 Z" fill="#4189CC"/>
<path d="M98.8,223.4 H100.1 Q101.1,223.4 101.1,224.4 V227.6 Q101.1,228.6 100.1,228.6 H96.2 V229.3 H99.3 V231 Q99.3,232 98.3,232 H94.6 Q93.6,232 93.6,231 V228 Q93.6,227 94.6,227 H97.8 Q98.8,227 98.8,226 Z" fill="#F2C630"/>
<rect x="93.8" y="221.8" width="1.2" height="1.2" fill="#1F3550"/>
<rect x="96.6" y="229.9" width="1.2" height="1.2" fill="#5A4A10"/>
<path d="M88.75,253 V238.9 H96" fill="none" stroke="#ABABAB" stroke-width="1.7"/>
<path d="M96,238.2 L99,241.2 V242 H96 Z" fill="#D8D8D8"/><rect x="96.8" y="239.8" width="1" height="1" fill="#444"/>
<path d="M92.5,243.8 Q92.5,242.8 93.5,242.8 H97.2 Q98.2,242.8 98.2,243.8 V247.3 Q98.2,248.3 97.2,248.3 H94.2 Q93.2,248.3 93.2,249.3 V250.7 H90.9 Q89.9,250.7 89.9,249.7 V247 Q89.9,246 90.9,246 H95.5 V245.3 H92.5 Z" fill="#4189CC"/>
<path d="M98.8,245.4 H100.1 Q101.1,245.4 101.1,246.4 V249.6 Q101.1,250.6 100.1,250.6 H96.2 V251.3 H99.3 V253 Q99.3,254 98.3,254 H94.6 Q93.6,254 93.6,253 V250 Q93.6,249 94.6,249 H97.8 Q98.8,249 98.8,248 Z" fill="#F2C630"/>
<rect x="93.8" y="243.8" width="1.2" height="1.2" fill="#1F3550"/>
<rect x="96.6" y="251.9" width="1.2" height="1.2" fill="#5A4A10"/>
<path d="M47,265 H56.5 L51.75,273 Z" fill="#AFAFAF"/>
<path d="M67,262 H74 L76,264 H81 V274 H67 Z" fill="#D5A05C"/>
<rect x="69.2" y="266" width="9.8" height="6" fill="#33363A"/>
<circle cx="72" cy="269" r="1.9" fill="#6FB3DF"/>
<path d="M68,286 L76,290.75 L68,295.5 Z" fill="#AFAFAF"/>
<path d="M87,284 H94 L96,286 H101 V296 H87 Z" fill="#D5A05C"/>
<rect x="89.2" y="288" width="9.8" height="6" fill="#33363A"/>
<circle cx="92" cy="291" r="1.9" fill="#6FB3DF"/>
<path d="M68,308 L76,312.75 L68,317.5 Z" fill="#AFAFAF"/>
<path d="M87,306 H94 L96,308 H101 V318 H87 Z" fill="#D5A05C"/>
<rect x="89.2" y="310" width="9.8" height="6" fill="#33363A"/>
<circle cx="92" cy="313" r="1.9" fill="#6FB3DF"/>
<path d="M88.75,341 V326.9 H96" fill="none" stroke="#ABABAB" stroke-width="1.7"/>
<path d="M96,326.2 L99,329.2 V330 H96 Z" fill="#D8D8D8"/><rect x="96.8" y="327.8" width="1" height="1" fill="#444"/>
<path d="M92.5,331.8 Q92.5,330.8 93.5,330.8 H97.2 Q98.2,330.8 98.2,331.8 V335.3 Q98.2,336.3 97.2,336.3 H94.2 Q93.2,336.3 93.2,337.3 V338.7 H90.9 Q89.9,338.7 89.9,337.7 V335 Q89.9,334 90.9,334 H95.5 V333.3 H92.5 Z" fill="#4189CC"/>
<path d="M98.8,333.4 H100.1 Q101.1,333.4 101.1,334.4 V337.6 Q101.1,338.6 100.1,338.6 H96.2 V339.3 H99.3 V341 Q99.3,342 98.3,342 H94.6 Q93.6,342 93.6,341 V338 Q93.6,337 94.6,337 H97.8 Q98.8,337 98.8,336 Z" fill="#F2C630"/>
<rect x="93.8" y="331.8" width="1.2" height="1.2" fill="#1F3550"/>
<rect x="96.6" y="339.9" width="1.2" height="1.2" fill="#5A4A10"/>
<path d="M88.75,363 V348.9 H96" fill="none" stroke="#ABABAB" stroke-width="1.7"/>
<path d="M96,348.2 L99,351.2 V352 H96 Z" fill="#D8D8D8"/><rect x="96.8" y="349.8" width="1" height="1" fill="#444"/>
<path d="M92.5,353.8 Q92.5,352.8 93.5,352.8 H97.2 Q98.2,352.8 98.2,353.8 V357.3 Q98.2,358.3 97.2,358.3 H94.2 Q93.2,358.3 93.2,359.3 V360.7 H90.9 Q89.9,360.7 89.9,359.7 V357 Q89.9,356 90.9,356 H95.5 V355.3 H92.5 Z" fill="#4189CC"/>
<path d="M98.8,355.4 H100.1 Q101.1,355.4 101.1,356.4 V359.6 Q101.1,360.6 100.1,360.6 H96.2 V361.3 H99.3 V363 Q99.3,364 98.3,364 H94.6 Q93.6,364 93.6,363 V360 Q93.6,359 94.6,359 H97.8 Q98.8,359 98.8,358 Z" fill="#F2C630"/>
<rect x="93.8" y="353.8" width="1.2" height="1.2" fill="#1F3550"/>
<rect x="96.6" y="361.9" width="1.2" height="1.2" fill="#5A4A10"/>
<path d="M88.75,385 V370.9 H96" fill="none" stroke="#ABABAB" stroke-width="1.7"/>
<path d="M96,370.2 L99,373.2 V374 H96 Z" fill="#D8D8D8"/><rect x="96.8" y="371.8" width="1" height="1" fill="#444"/>
<path d="M92.5,375.8 Q92.5,374.8 93.5,374.8 H97.2 Q98.2,374.8 98.2,375.8 V379.3 Q98.2,380.3 97.2,380.3 H94.2 Q93.2,380.3 93.2,381.3 V382.7 H90.9 Q89.9,382.7 89.9,381.7 V379 Q89.9,378 90.9,378 H95.5 V377.3 H92.5 Z" fill="#4189CC"/>
<path d="M98.8,377.4 H100.1 Q101.1,377.4 101.1,378.4 V381.6 Q101.1,382.6 100.1,382.6 H96.2 V383.3 H99.3 V385 Q99.3,386 98.3,386 H94.6 Q93.6,386 93.6,385 V382 Q93.6,381 94.6,381 H97.8 Q98.8,381 98.8,380 Z" fill="#F2C630"/>
<rect x="93.8" y="375.8" width="1.2" height="1.2" fill="#1F3550"/>
<rect x="96.6" y="383.9" width="1.2" height="1.2" fill="#5A4A10"/>
<path d="M88.75,407 V392.9 H96" fill="none" stroke="#ABABAB" stroke-width="1.7"/>
<path d="M96,392.2 L99,395.2 V396 H96 Z" fill="#D8D8D8"/><rect x="96.8" y="393.8" width="1" height="1" fill="#444"/>
<path d="M92.5,397.8 Q92.5,396.8 93.5,396.8 H97.2 Q98.2,396.8 98.2,397.8 V401.3 Q98.2,402.3 97.2,402.3 H94.2 Q93.2,402.3 93.2,403.3 V404.7 H90.9 Q89.9,404.7 89.9,403.7 V401 Q89.9,400 90.9,400 H95.5 V399.3 H92.5 Z" fill="#4189CC"/>
<path d="M98.8,399.4 H100.1 Q101.1,399.4 101.1,400.4 V403.6 Q101.1,404.6 100.1,404.6 H96.2 V405.3 H99.3 V407 Q99.3,408 98.3,408 H94.6 Q93.6,408 93.6,407 V404 Q93.6,403 94.6,403 H97.8 Q98.8,403 98.8,402 Z" fill="#F2C630"/>
<rect x="93.8" y="397.8" width="1.2" height="1.2" fill="#1F3550"/>
<rect x="96.6" y="405.9" width="1.2" height="1.2" fill="#5A4A10"/>
<path d="M88.75,429 V414.9 H96" fill="none" stroke="#ABABAB" stroke-width="1.7"/>
<path d="M96,414.2 L99,417.2 V418 H96 Z" fill="#D8D8D8"/><rect x="96.8" y="415.8" width="1" height="1" fill="#444"/>
<path d="M92.5,419.8 Q92.5,418.8 93.5,418.8 H97.2 Q98.2,418.8 98.2,419.8 V423.3 Q98.2,424.3 97.2,424.3 H94.2 Q93.2,424.3 93.2,425.3 V426.7 H90.9 Q89.9,426.7 89.9,425.7 V423 Q89.9,422 90.9,422 H95.5 V421.3 H92.5 Z" fill="#4189CC"/>
<path d="M98.8,421.4 H100.1 Q101.1,421.4 101.1,422.4 V425.6 Q101.1,426.6 100.1,426.6 H96.2 V427.3 H99.3 V429 Q99.3,430 98.3,430 H94.6 Q93.6,430 93.6,429 V426 Q93.6,425 94.6,425 H97.8 Q98.8,425 98.8,424 Z" fill="#F2C630"/>
<rect x="93.8" y="419.8" width="1.2" height="1.2" fill="#1F3550"/>
<rect x="96.6" y="427.9" width="1.2" height="1.2" fill="#5A4A10"/>
<path d="M68.9,450.6 V436.9 H75.5 L78.1,439.5 V450.6 Z" fill="#33363A" stroke="#A9A9A9" stroke-width="1.8"/>
<rect x="71" y="442" width="5" height="1.1" fill="#4A9FD8"/>
<rect x="71" y="444.1" width="5" height="1.1" fill="#4A9FD8"/>
<rect x="71" y="446.2" width="5" height="1.1" fill="#4A9FD8"/>
<path d="M68.9,472.6 V458.9 H75.5 L78.1,461.5 V472.6 Z" fill="#33363A" stroke="#A9A9A9" stroke-width="1.8"/>
<rect x="71" y="464" width="5" height="1.1" fill="#4A9FD8"/>
<rect x="71" y="466.1" width="5" height="1.1" fill="#4A9FD8"/>
<rect x="71" y="468.2" width="5" height="1.1" fill="#4A9FD8"/>
<path d="M68.9,494.6 V480.9 H75.5 L78.1,483.5 V494.6 Z" fill="#33363A" stroke="#A9A9A9" stroke-width="1.8"/>
<rect x="71" y="486" width="5" height="1.1" fill="#4A9FD8"/>
<rect x="71" y="488.1" width="5" height="1.1" fill="#4A9FD8"/>
<rect x="71" y="490.2" width="5" height="1.1" fill="#4A9FD8"/>
<path d="M68.9,516.6 V502.9 H75.5 L78.1,505.5 V516.6 Z" fill="#33363A" stroke="#A9A9A9" stroke-width="1.8"/>
<rect x="68" y="507" width="13.5" height="6.5" fill="#7EC4F0"/>
<text x="68.8" y="512.8" font-family="Liberation Mono" font-weight="bold" font-size="6.5" fill="#1E1E1E" textLength="12" lengthAdjust="spacingAndGlyphs">RST</text>
<path d="M68.75,539 V524.9 H76" fill="none" stroke="#ABABAB" stroke-width="1.7"/>
<path d="M76,524.2 L79,527.2 V528 H76 Z" fill="#D8D8D8"/><rect x="76.8" y="525.8" width="1" height="1" fill="#444"/>
<path d="M72.5,529.8 Q72.5,528.8 73.5,528.8 H77.2 Q78.2,528.8 78.2,529.8 V533.3 Q78.2,534.3 77.2,534.3 H74.2 Q73.2,534.3 73.2,535.3 V536.7 H70.9 Q69.9,536.7 69.9,535.7 V533 Q69.9,532 70.9,532 H75.5 V531.3 H72.5 Z" fill="#4189CC"/>
<path d="M78.8,531.4 H80.1 Q81.1,531.4 81.1,532.4 V535.6 Q81.1,536.6 80.1,536.6 H76.2 V537.3 H79.3 V539 Q79.3,540 78.3,540 H74.6 Q73.6,540 73.6,539 V536 Q73.6,535 74.6,535 H77.8 Q78.8,535 78.8,534 Z" fill="#F2C630"/>
<rect x="73.8" y="529.8" width="1.2" height="1.2" fill="#1F3550"/>
<rect x="76.6" y="537.9" width="1.2" height="1.2" fill="#5A4A10"/>
<path d="M491.5,135.5 H499.5 V141 L495.5,144.5 L491.5,141 Z" fill="#313335" stroke="#7A7A7A" stroke-width="1"/><path d="M493.5,139.5 H497.5" stroke="#9A9A9A" stroke-width="1"/>
<path d="M491.5,198.5 H499.5 V204 L495.5,207.5 L491.5,204 Z" fill="#313335" stroke="#7A7A7A" stroke-width="1"/><path d="M493.5,202.5 H497.5" stroke="#9A9A9A" stroke-width="1"/>
<path d="M491.5,324.5 H499.5 V330 L495.5,333.5 L491.5,330 Z" fill="#313335" stroke="#7A7A7A" stroke-width="1"/><path d="M493.5,328.5 H497.5" stroke="#9A9A9A" stroke-width="1"/>
<path d="M491.5,345.5 H499.5 V351 L495.5,354.5 L491.5,351 Z" fill="#313335" stroke="#7A7A7A" stroke-width="1"/><path d="M493.5,349.5 H497.5" stroke="#9A9A9A" stroke-width="1"/>
<path d="M491.5,416.5 H499.5 V411 L495.5,407.5 L491.5,411 Z" fill="#313335" stroke="#7A7A7A" stroke-width="1"/><path d="M493.5,412.5 H497.5" stroke="#9A9A9A" stroke-width="1"/>
<rect x="543" y="442" width="1" height="85" fill="#3B3B3B"/><rect x="583" y="463" width="1" height="21" fill="#3B3B3B"/><rect x="583" y="505" width="1" height="22" fill="#3B3B3B"/>
<polyline points="1011.5,375.5 1013.5,377.5 1015.5,375.5 1017.5,377.5 1019.5,375.5 1021.5,377.5 1023.5,375.5 1025.5,377.5 1027.5,375.5 1029.5,377.5 1031.5,375.5 1033.5,377.5 1035.5,375.5 1037.5,377.5 1039.5,375.5 1041.5,377.5 1043.5,375.5 1045.5,377.5 1047.5,375.5 1049.5,377.5 1051.5,375.5 1053.5,377.5 1055.5,375.5 1057.5,377.5 1059.5,375.5 1061.5,377.5 1063.5,375.5 1065.5,377.5 1067.5,375.5 1069.5,377.5 1071.5,375.5 1073.5,377.5 1075.5,375.5 1077.5,377.5 1079.5,375.5 1081.5,377.5 1083.5,375.5 1085.5,377.5 1087.5,375.5 1089.5,377.5 1091.5,375.5 1093.5,377.5 1095.5,375.5 1097.5,377.5 1099.5,375.5 1101.5,377.5 1103.5,375.5 1105.5,377.5 1107.5,375.5 1109.5,377.5 1111.5,375.5 1113.5,377.5 1115.5,375.5 1117.5,377.5 1119.5,375.5 1121.5,377.5 1123.5,375.5" fill="none" stroke="#5E9A5E" stroke-width="0.9"/>
</svg>
</body></html>
